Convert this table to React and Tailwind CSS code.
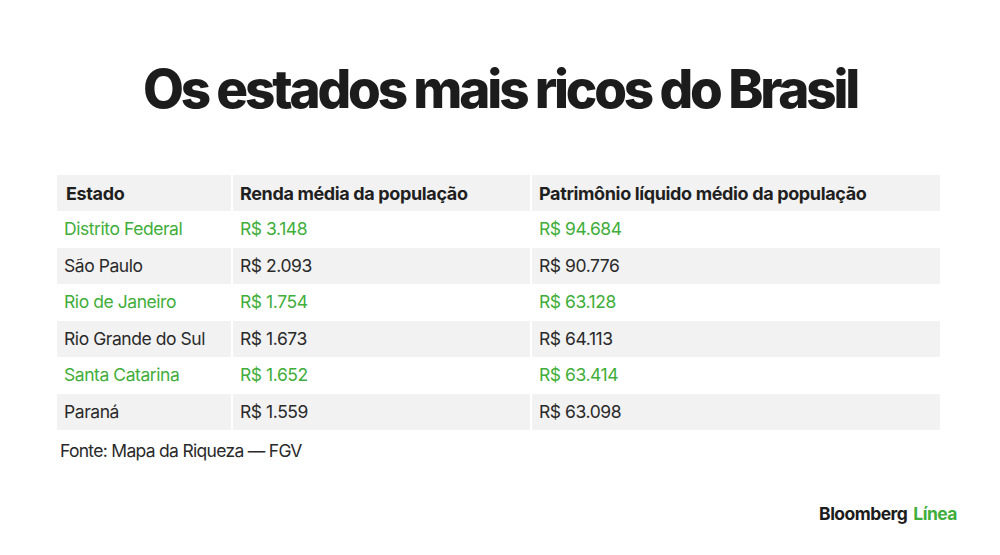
const rows = [
    { estado: 'Distrito Federal', renda: 'R$ 3.148', patrimonio: 'R$ 94.684', green: true },
    { estado: 'São Paulo', renda: 'R$ 2.093', patrimonio: 'R$ 90.776' },
    { estado: 'Rio de Janeiro', renda: 'R$ 1.754', patrimonio: 'R$ 63.128', green: true },
    { estado: 'Rio Grande do Sul', renda: 'R$ 1.673', patrimonio: 'R$ 64.113' },
    { estado: 'Santa Catarina', renda: 'R$ 1.652', patrimonio: 'R$ 63.414', green: true },
    { estado: 'Paraná', renda: 'R$ 1.559', patrimonio: 'R$ 63.098' },
];

const App = () => {
    return (
        <div className="w-[1000px] h-[555px] bg-white overflow-hidden font-['Inter',sans-serif] text-[#222]">
            <h1 className="pt-[59px] text-center text-[53px] leading-[60px] font-extrabold tracking-[-0.06em] text-[#1c1c1c]">
                Os estados mais ricos do Brasil
            </h1>

            <div className="mt-[56px] mx-[57px] w-[883px] text-[17.5px] tracking-[-0.025em]">
                <div className="flex gap-[2px] h-[36px] text-[18px] font-bold tracking-[-0.02em] text-[#1f1f1f]">
                    <div className="w-[174px] bg-[#f2f2f2] flex items-center px-[9px]">Estado</div>
                    <div className="w-[297px] bg-[#f2f2f2] flex items-center px-[7px]">Renda média da população</div>
                    <div className="flex-1 bg-[#f2f2f2] flex items-center px-[7px]">Patrimônio líquido médio da população</div>
                </div>
                {rows.map((r, i) => (
                    <div
                        key={r.estado}
                        className={`flex gap-[2px] h-[36.5px] ${r.green ? 'text-[#3fae3a]' : 'text-[#2a2a2a]'}`}
                    >
                        <div className={`w-[174px] flex items-center px-[7px] ${i % 2 ? 'bg-[#f2f2f2]' : ''}`}>{r.estado}</div>
                        <div className={`w-[297px] flex items-center px-[7px] ${i % 2 ? 'bg-[#f2f2f2]' : ''}`}>{r.renda}</div>
                        <div className={`flex-1 flex items-center px-[7px] ${i % 2 ? 'bg-[#f2f2f2]' : ''}`}>{r.patrimonio}</div>
                    </div>
                ))}
                <p className="mt-[8px] pl-[3px] tracking-[-0.04em] text-[#2a2a2a]">Fonte: Mapa da Riqueza — FGV</p>
            </div>

            <div className="flex justify-end pr-[43px] mt-[37px] text-[17.5px] font-bold tracking-[-0.03em]">
                <span className="text-[#1c1c1c]">Bloomberg</span>
                <span className="ml-[6px] text-[#3fae3a]">Línea</span>
            </div>
        </div>
    );
};

export default App;
